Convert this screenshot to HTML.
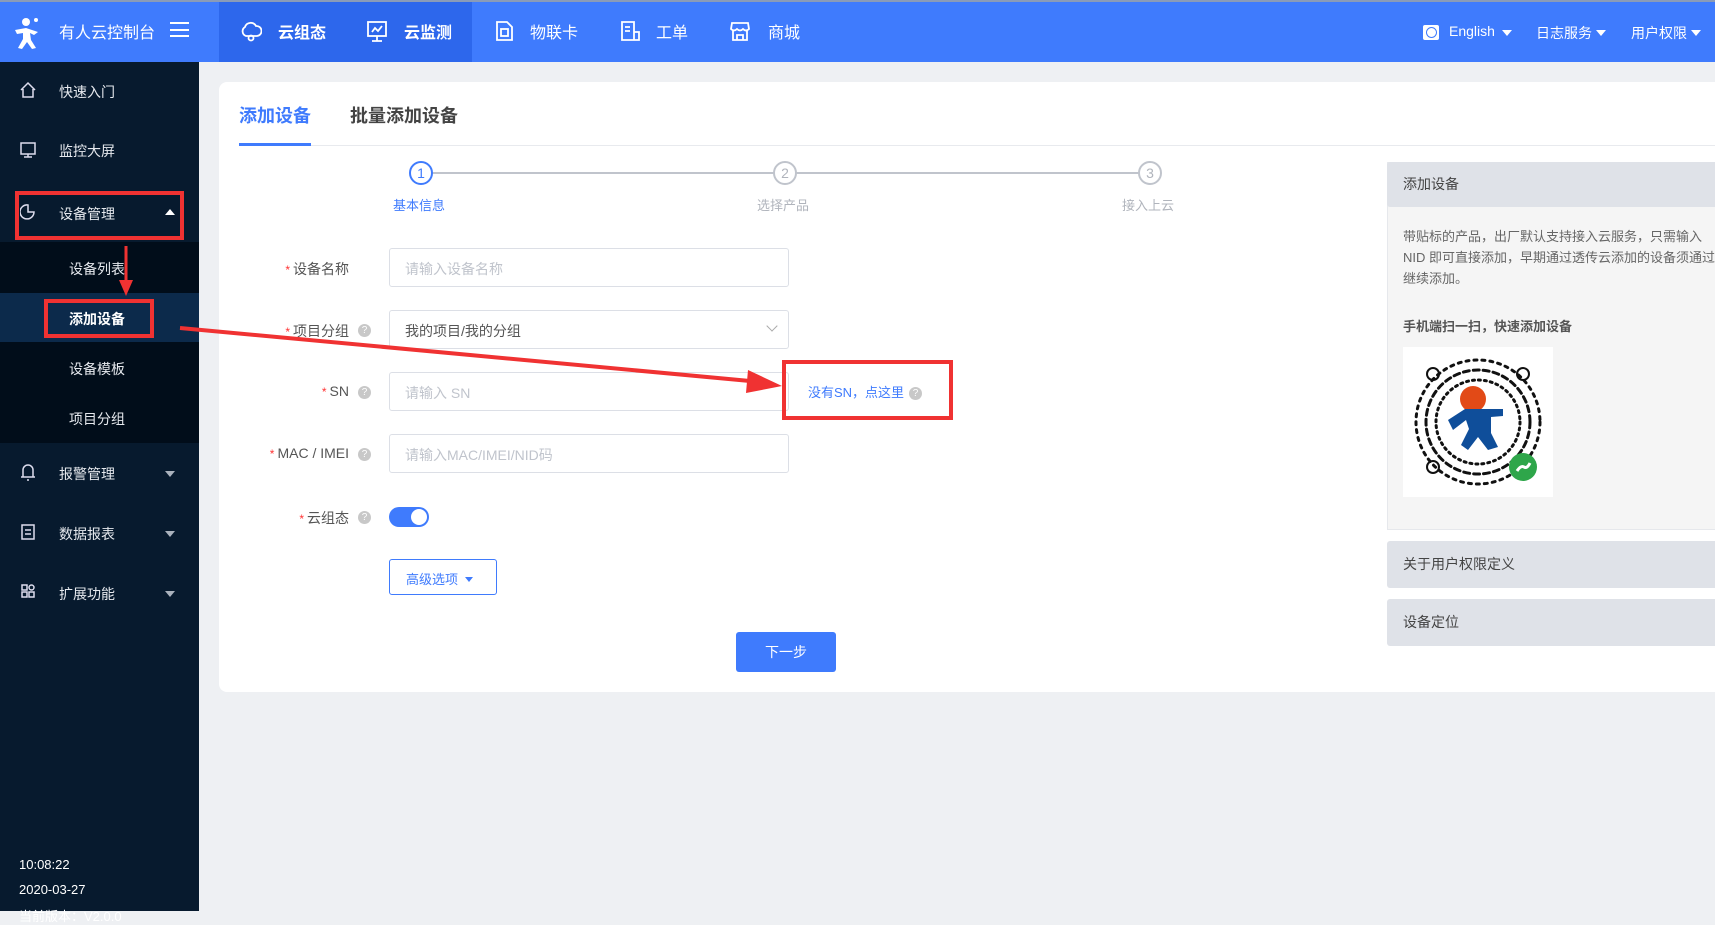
<!DOCTYPE html>
<html><head><meta charset="utf-8"><style>
*{margin:0;padding:0;box-sizing:border-box}
body{width:1715px;height:911px;overflow:hidden;background:#eef0f3;font-family:"Liberation Sans","Noto Sans CJK SC",sans-serif;position:relative;color:#333}
.a{position:absolute}
#hd{left:0;top:0;width:1715px;height:62px;background:#3f7bfd;border-top:2px solid #8a9bb8}
#hd .t{color:#fff;font-size:16px;position:absolute;top:17px;white-space:nowrap}
#hd .dk{left:219px;top:0;width:253px;height:60px;background:#2d67ec}
#sb{left:0;top:62px;width:199px;height:849px;background:#071a2e}
.si{position:absolute;left:59px;color:#e6e9ee;font-size:14px;white-space:nowrap}
.sub{position:absolute;left:69px;color:#e6e9ee;font-size:14px}
.car{position:absolute;left:165px;width:0;height:0;border-left:5px solid transparent;border-right:5px solid transparent;border-top:6px solid #aab2bd}
#card{left:219px;top:82px;width:1510px;height:610px;background:#fff;border-radius:8px}
.lbl{position:absolute;right:1366px;font-size:14px;color:#555;white-space:nowrap}
.lbl b{color:#f33;font-weight:normal;font-size:12px;margin-right:3px}
.q{position:absolute;right:-22px;top:3px;width:13px;height:13px;border-radius:50%;background:#c8c8c8;color:#fff;font-size:10px;line-height:13px;text-align:center}
.qi{display:inline-block;width:13px;height:13px;border-radius:50%;background:#c8c8c8;color:#fff;font-size:10px;line-height:13px;text-align:center;margin-left:5px;vertical-align:1px}
.inp{position:absolute;left:389px;width:400px;height:39px;border:1px solid #dcdfe6;border-radius:3px;font-size:14px;color:#c0c4cc;padding:10px 15px;white-space:nowrap}
.rb{position:absolute;border:4px solid #f03232}
.ph{position:absolute;left:1387px;width:330px;background:#dfe2e8;font-size:14px;color:#444;padding-left:16px;border-radius:3px 0 0 3px}
.st{position:absolute;width:24px;height:24px;border-radius:50%;border:2px solid #c0c4cc;color:#b0b4bc;font-size:14px;text-align:center;line-height:20px}
.sl{position:absolute;font-size:13px;color:#b0b4bc;white-space:nowrap}
</style></head><body>
<div id="hd" class="a">
 <div class="a dk"></div>
 <svg class="a" style="left:12px;top:14px" width="32" height="34" viewBox="0 0 32 34"><circle cx="14" cy="6" r="4" fill="#fff"/><circle cx="24" cy="4" r="2" fill="#fff"/><path d="M3 14 L14 12 L26 16 L22 19 L18 17 L19 24 L24 32 L20 33 L15 26 L10 33 L6 32 L11 23 L11 17 L5 18 Z" fill="#fff"/></svg>
 <div class="t" style="left:59px">有人云控制台</div>
 <div class="a" style="left:170px;top:20px;width:19px;height:15px;border-top:2px solid #fff;border-bottom:2px solid #fff"><div style="margin-top:4.5px;border-top:2px solid #fff"></div></div>
 <svg class="a" style="left:240px;top:18px" width="22" height="22" viewBox="0 0 22 22" fill="none" stroke="#fff" stroke-width="1.8"><path d="M6 16 A5 5 0 0 1 5 7 A6 6 0 0 1 16 6 A5 5 0 0 1 17 16 Z"/><circle cx="11" cy="18" r="2.5"/></svg>
 <div class="t" style="left:278px;font-weight:bold">云组态</div>
 <svg class="a" style="left:366px;top:18px" width="22" height="22" viewBox="0 0 22 22" fill="none" stroke="#fff" stroke-width="1.8"><rect x="2" y="2" width="18" height="14"/><path d="M11 16 V21 M6 21 H16 M6 12 L9 8 L12 11 L16 6"/></svg>
 <div class="t" style="left:404px;font-weight:bold">云监测</div>
 <svg class="a" style="left:494px;top:18px" width="20" height="22" viewBox="0 0 20 22" fill="none" stroke="#fff" stroke-width="1.8"><path d="M3 2 H13 L18 7 V20 H3 Z"/><rect x="7" y="9" width="7" height="7"/></svg>
 <div class="t" style="left:530px">物联卡</div>
 <svg class="a" style="left:619px;top:18px" width="22" height="22" viewBox="0 0 22 22" fill="none" stroke="#fff" stroke-width="1.8"><path d="M3 2 H15 V20 H3 Z M15 12 H20 V20 H15 M6 7 H11 M6 11 H11"/></svg>
 <div class="t" style="left:656px">工单</div>
 <svg class="a" style="left:729px;top:18px" width="22" height="22" viewBox="0 0 22 22" fill="none" stroke="#fff" stroke-width="1.8"><path d="M3 3 H19 L20 9 Q17 12 14 9 Q11 12 8 9 Q5 12 2 9 Z M4 11 V20 H18 V11 M8 20 V15 H14 V20"/></svg>
 <div class="t" style="left:768px">商城</div>
 <div class="a" style="left:1423px;top:23px;width:16px;height:15px;background:#fff;border-radius:2px"><div style="margin:2px auto;width:11px;height:11px;border:1.5px solid #3f7bfd;border-radius:50%"></div></div>
 <div class="t" style="left:1449px;font-size:14px;top:21px">English</div>
 <div class="car" style="left:1502px;top:28px;border-top-color:#fff"></div>
 <div class="t" style="left:1536px;font-size:14px;top:21px">日志服务</div>
 <div class="car" style="left:1596px;top:28px;border-top-color:#fff"></div>
 <div class="t" style="left:1631px;font-size:14px;top:21px">用户权限</div>
 <div class="car" style="left:1691px;top:28px;border-top-color:#fff"></div>
</div>
<div id="sb" class="a">
 <div class="a" style="left:0;top:180px;width:199px;height:201px;background:#010d1a"></div>
 <div class="a" style="left:0;top:231px;width:199px;height:49px;background:#0c2a4b"></div>
</div>
<svg class="a" style="left:19px;top:81px" width="18" height="18" viewBox="0 0 18 18" fill="none" stroke="#dde" stroke-width="1.5"><path d="M2 9 L9 2 L16 9 M4 8 V16 H14 V8"/></svg>
<div class="si" style="top:82px">快速入门</div>
<svg class="a" style="left:19px;top:141px" width="18" height="18" viewBox="0 0 18 18" fill="none" stroke="#dde" stroke-width="1.5"><rect x="2" y="2" width="14" height="11"/><path d="M9 13 V16 M5 16 H13"/></svg>
<div class="si" style="top:141px">监控大屏</div>
<svg class="a" style="left:20px;top:203px" width="16" height="18" viewBox="0 0 16 18" fill="none" stroke="#dde" stroke-width="1.5"><path d="M8 2 A7 7 0 1 0 14 9 H8 Z"/></svg>
<div class="si" style="top:204px">设备管理</div>
<div class="car" style="left:165px;top:209px;border-top:0;border-bottom:6px solid #fff"></div>
<div class="sub" style="top:259px">设备列表</div>
<div class="sub" style="top:309px;color:#fff;font-weight:bold">添加设备</div>
<div class="sub" style="top:359px">设备模板</div>
<div class="sub" style="top:409px">项目分组</div>
<svg class="a" style="left:20px;top:463px" width="16" height="18" viewBox="0 0 16 18" fill="none" stroke="#dde" stroke-width="1.5"><path d="M3 14 V7 A5 5 0 0 1 13 7 V14 Z M1 14 H15 M7 17 H9"/></svg>
<div class="si" style="top:464px">报警管理</div><div class="car" style="top:471px"></div>
<svg class="a" style="left:20px;top:523px" width="16" height="18" viewBox="0 0 16 18" fill="none" stroke="#dde" stroke-width="1.5"><rect x="2" y="2" width="12" height="14"/><path d="M5 7 H11 M5 11 H11"/></svg>
<div class="si" style="top:524px">数据报表</div><div class="car" style="top:531px"></div>
<svg class="a" style="left:20px;top:583px" width="16" height="18" viewBox="0 0 16 18" fill="none" stroke="#dde" stroke-width="1.5"><rect x="2" y="2" width="5" height="5"/><rect x="9" y="9" width="5" height="5"/><rect x="2" y="9" width="5" height="5"/><circle cx="11.5" cy="4.5" r="2.5"/></svg>
<div class="si" style="top:584px">扩展功能</div><div class="car" style="top:591px"></div>
<div class="a" style="left:19px;top:857px;color:#fff;font-size:13px">10:08:22</div>
<div class="a" style="left:19px;top:882px;color:#fff;font-size:13px">2020-03-27</div>
<div class="a" style="left:19px;top:906px;color:#fff;font-size:13px">当前版本：V2.0.0</div>
<div id="card" class="a">
 <div class="a" style="left:20px;top:20px;font-size:18px;font-weight:bold;color:#3f7bfd">添加设备</div>
 <div class="a" style="left:131px;top:20px;font-size:18px;font-weight:bold;color:#444">批量添加设备</div>
 <div class="a" style="left:20px;top:63px;width:1500px;height:1px;background:#e8eaee"></div>
 <div class="a" style="left:20px;top:61px;width:72px;height:3px;background:#3f7bfd"></div>
 <div class="a" style="left:202px;top:90px;width:728px;height:2px;background:#c0c4cc"></div>
</div>
<div class="st" style="left:409px;top:161px;border-color:#3f7bfd;color:#3f7bfd;background:#fff">1</div>
<div class="st" style="left:773px;top:161px;background:#fff">2</div>
<div class="st" style="left:1138px;top:161px;background:#fff">3</div>
<div class="sl" style="left:393px;top:195px;color:#3f7bfd">基本信息</div>
<div class="sl" style="left:757px;top:195px">选择产品</div>
<div class="sl" style="left:1122px;top:195px">接入上云</div>

<div class="lbl" style="top:259px"><b>*</b>设备名称</div>
<div class="inp" style="top:248px">请输入设备名称</div>
<div class="lbl" style="top:321px"><b>*</b>项目分组<span class="q">?</span></div>
<div class="inp" style="top:310px;color:#555">我的项目/我的分组<span style="position:absolute;right:12px;top:11px;width:8px;height:8px;border-right:1px solid #aaa;border-bottom:1px solid #aaa;transform:rotate(45deg)"></span></div>
<div class="lbl" style="top:383px"><b>*</b>SN<span class="q">?</span></div>
<div class="inp" style="top:372px">请输入 SN</div>
<div class="lbl" style="top:445px"><b>*</b>MAC / IMEI<span class="q">?</span></div>
<div class="inp" style="top:434px">请输入MAC/IMEI/NID码</div>
<div class="lbl" style="top:508px"><b>*</b>云组态<span class="q">?</span></div>
<div class="a" style="left:389px;top:507px;width:40px;height:20px;border-radius:10px;background:#3f7bfd"><div style="position:absolute;right:2px;top:2px;width:16px;height:16px;border-radius:50%;background:#fff"></div></div>
<div class="a" style="left:389px;top:559px;width:108px;height:36px;border:1px solid #3f7bfd;border-radius:3px;color:#3f7bfd;font-size:13px;padding:9px 0 0 16px">高级选项 <span style="display:inline-block;border-left:4px solid transparent;border-right:4px solid transparent;border-top:5px solid #3f7bfd;vertical-align:2px;margin-left:3px"></span></div>
<div class="a" style="left:736px;top:632px;width:100px;height:40px;background:#3f7bfd;border-radius:3px;color:#fff;font-size:14px;text-align:center;line-height:40px">下一步</div>
<div class="a" style="left:808px;top:382px;font-size:13px;color:#3f7bfd">没有SN，点这里<span class="qi">?</span></div>

<div class="a" style="left:1387px;top:162px;width:330px;height:368px;background:#f5f5f5;border:1px solid #e6e8ec"></div>
<div class="ph" style="top:162px;height:45px;line-height:45px">添加设备</div>
<div class="a" style="left:1403px;top:226px;width:320px;font-size:13px;color:#666;line-height:21px;white-space:nowrap">带贴标的产品，出厂默认支持接入云服务，只需输入<br>NID 即可直接添加，早期通过透传云添加的设备须通过<br>继续添加。</div>
<div class="a" style="left:1403px;top:316px;font-size:13px;color:#555;font-weight:bold">手机端扫一扫，快速添加设备</div>
<div class="a" style="left:1403px;top:347px;width:150px;height:150px;background:#fff"></div>
<svg class="a" style="left:1403px;top:347px" width="150" height="150" viewBox="0 0 150 150">
<g stroke="#111" stroke-width="3" stroke-linecap="round" fill="none" stroke-dasharray="3 5"><circle cx="75" cy="75" r="62"/><circle cx="75" cy="75" r="52" stroke-dasharray="6 4"/><circle cx="75" cy="75" r="42" stroke-dasharray="2 4"/></g>
<g fill="none" stroke="#111" stroke-width="2"><circle cx="30" cy="27" r="6"/><circle cx="120" cy="27" r="6"/><circle cx="30" cy="120" r="6"/></g>
<circle cx="70" cy="52" r="13" fill="#e24a17"/>
<path d="M45 73 L62 62 L100 62 L100 69 L88 70 L88 86 L95 100 L85 103 L75 90 L65 103 L58 98 L66 82 L63 73 L50 83 Z" fill="#0f4e9a"/>
<circle cx="120" cy="120" r="14" fill="#2ea64a"/><path d="M114 124 Q118 118 121 120 Q124 122 127 116" stroke="#fff" stroke-width="3" fill="none"/>
</svg>
<div class="ph" style="top:541px;height:47px;line-height:47px">关于用户权限定义</div>
<div class="ph" style="top:599px;height:47px;line-height:47px">设备定位</div>

<div class="rb" style="left:15px;top:191px;width:169px;height:49px"></div>
<div class="rb" style="left:44px;top:299px;width:110px;height:39px"></div>
<div class="rb" style="left:782px;top:360px;width:171px;height:60px"></div>
<svg class="a" style="left:0;top:0" width="1715" height="911">
<path d="M126 246 L126 284" stroke="#f03232" stroke-width="3"/><path d="M119 280 L126 296 L133 280 Z" fill="#f03232"/>
<path d="M180 328 L750 381" stroke="#f03232" stroke-width="4"/>
<path d="M748 370 L782 386 L746 393 Z" fill="#f03232"/>
</svg>
</body></html>
